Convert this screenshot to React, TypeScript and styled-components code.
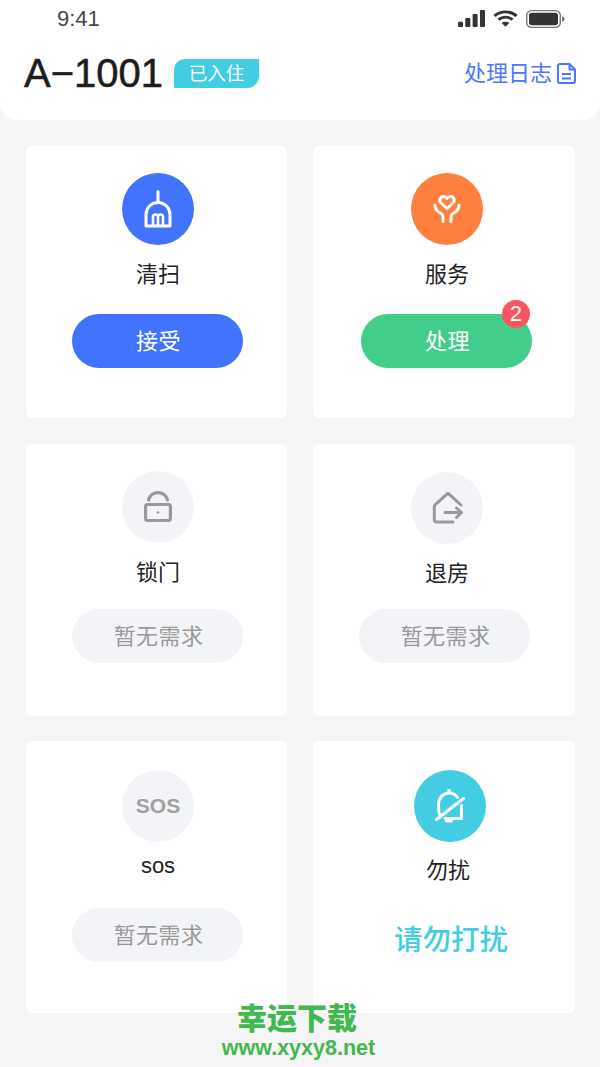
import React from 'react';
import styled, { createGlobalStyle } from 'styled-components';

const CJK = `"Noto Sans CJK SC", "Liberation Sans", sans-serif`;

const GlobalStyle = createGlobalStyle`
  html, body { margin: 0; padding: 0; background: #f5f5f5; }
  * { box-sizing: border-box; }
`;

const Page = styled.div`
  width: 600px;
  height: 1067px;
  position: relative;
  overflow: hidden;
  background: #f5f5f5;
  font-family: ${CJK};
`;

/* ── header ── */

const Header = styled.header`
  height: 120px;
  background: #fff;
  border-radius: 0 0 18px 18px;
`;

const StatusBar = styled.div`
  height: 40px;
  display: flex;
  align-items: center;
  justify-content: space-between;
  padding: 0 35px 3px 57px;
`;

const Clock = styled.span`
  font-family: "Liberation Sans", sans-serif;
  font-size: 22px;
  color: #484848;
`;

const StatusIcons = styled.div`
  display: flex;
  align-items: center;
  gap: 8px;
`;

const TitleRow = styled.div`
  display: flex;
  align-items: center;
  padding: 0 24px;
  height: 66px;
`;

const RoomName = styled.h1`
  margin: 0;
  font-family: "Liberation Sans", sans-serif;
  font-size: 40px;
  font-weight: 400;
  color: #1d1d1d;
  line-height: 50px;
  -webkit-text-stroke: 0.5px #1d1d1d;
`;

const StatusTag = styled.span`
  margin-left: 11px;
  width: 85px;
  height: 29px;
  padding-bottom: 2px;
  display: flex;
  align-items: center;
  justify-content: center;
  background: #42cde2;
  border-radius: 11px 0 12px 0;
  color: #fff;
  font-size: 18.5px;
`;

const LogLink = styled.a`
  margin-left: auto;
  display: flex;
  align-items: center;
  gap: 5px;
  color: #4a76ff;
  font-size: 22px;
  line-height: 30px;
  text-decoration: none;
`;

const LogText = styled.span`
  padding-bottom: 4px;
`;

/* ── cards ── */

const Grid = styled.main`
  display: grid;
  grid-template-columns: 261px 262px;
  grid-auto-rows: 272px;
  column-gap: 26px;
  row-gap: 25.5px;
  padding: 26px 0 0 26px;
`;

const Card = styled.section`
  background: #fff;
  border-radius: 6px;
  padding-top: 27px;
  display: flex;
  flex-direction: column;
  align-items: center;
`;

const Circle = styled.div<{ $bg: string; $shift: number; $top?: number }>`
  width: 72px;
  height: 72px;
  flex: none;
  border-radius: 50%;
  background: ${(p) => p.$bg};
  margin-top: ${(p) => p.$top ?? 0}px;
  margin-left: ${(p) => p.$shift * 2}px;
  display: flex;
  align-items: center;
  justify-content: center;
`;

const SosMark = styled.span`
  font-family: "Liberation Sans", sans-serif;
  font-size: 21px;
  font-weight: 700;
  color: #a0a0a0;
`;

const Label = styled.div<{ $top: number; $shift: number; $latin?: boolean }>`
  margin-top: ${(p) => p.$top}px;
  margin-left: ${(p) => p.$shift * 2}px;
  font-family: ${(p) => (p.$latin ? '"Liberation Sans", sans-serif' : CJK)};
  font-size: 22px;
  line-height: 30px;
  color: #222;
`;

const Action = styled.div<{ $bg: string; $fg: string; $top: number; $shift: number }>`
  position: relative;
  width: 171px;
  height: 54px;
  flex: none;
  margin-top: ${(p) => p.$top}px;
  margin-left: ${(p) => p.$shift * 2}px;
  padding: 0 0 4px 2px;
  border-radius: 27px;
  background: ${(p) => p.$bg};
  color: ${(p) => p.$fg};
  font-size: 22px;
  letter-spacing: 0.4px;
  display: flex;
  align-items: center;
  justify-content: center;
`;

const CountBadge = styled.span`
  position: absolute;
  top: -14px;
  right: 2px;
  width: 28px;
  height: 28px;
  border-radius: 50%;
  background: #fb5560;
  color: #fff;
  font-family: "Liberation Sans", sans-serif;
  font-size: 22px;
  line-height: 28px;
  text-align: center;
`;

const DndText = styled.div`
  margin-top: 35px;
  margin-left: 14px;
  font-size: 28.5px;
  line-height: 40px;
  font-weight: 500;
  color: #42cde2;
`;

/* ── watermark ── */

const Watermark = styled.div`
  position: absolute;
  left: 197px;
  top: 998px;
  width: 200px;
  display: flex;
  flex-direction: column;
  align-items: center;
  color: #3fb950;
  font-weight: 700;
`;

const WatermarkTitle = styled.div`
  font-size: 30px;
  line-height: 36px;
  font-weight: 900;
`;

const WatermarkUrl = styled.div`
  font-family: "Liberation Sans", sans-serif;
  font-size: 21.5px;
  line-height: 24px;
  margin: 2px 0 0 3px;
  white-space: nowrap;
`;

/* ── icons ── */

const SignalIcon = () => (
  <svg width="27" height="17" viewBox="0 0 27 19" preserveAspectRatio="none" fill="#333">
    <rect x="0" y="13" width="5" height="6" rx="1.2" />
    <rect x="7.3" y="9" width="5" height="10" rx="1.2" />
    <rect x="14.6" y="4.5" width="5" height="14.5" rx="1.2" />
    <rect x="22" y="0" width="5" height="19" rx="1.2" />
  </svg>
);

const WifiIcon = () => (
  <svg width="25" height="17" viewBox="0 0 25 19" preserveAspectRatio="none" fill="none" stroke="#333" strokeWidth="3.2">
    <path d="M1.5 6.6a15.5 15.5 0 0 1 22 0" />
    <path d="M5.6 10.8a9.7 9.7 0 0 1 13.8 0" />
    <path d="M12.5 18.6l-3.8-4a5.4 5.4 0 0 1 7.6 0z" fill="#333" stroke="none" />
  </svg>
);

const BatteryIcon = () => (
  <svg width="39" height="18" viewBox="0 0 39 20" preserveAspectRatio="none">
    <rect x="0.7" y="0.7" width="33.6" height="18.6" rx="5" fill="none" stroke="#777" strokeWidth="1.4" />
    <rect x="3" y="3" width="29" height="14" rx="3" fill="#333" />
    <path d="M36 7v6c1.6-.5 2.6-1.6 2.6-3S37.6 7.500 36 7z" fill="#777" />
  </svg>
);

const DocIcon = () => (
  <svg width="19" height="21" viewBox="0 0 19 21" fill="none" stroke="#4a76ff" strokeWidth="2" strokeLinejoin="round">
    <path d="M1 3a2 2 0 0 1 2-2h9.500L18 6.500V18a2 2 0 0 1-2 2H3a2 2 0 0 1-2-2z" />
    <path d="M12.500 1.500V6.500H17.500M5 11h9M5 15.500h9" />
  </svg>
);

const BroomIcon = () => (
  <svg width="28" height="38" viewBox="0 0 28 38" fill="none" stroke="#fff" strokeWidth="3" strokeLinecap="round" strokeLinejoin="round">
    <path d="M14 1.500v10" />
    <path d="M2 36V24.500a12 12 0 0 1 24 0V36z" />
    <path d="M9 35v-8a2.500 2.500 0 0 1 5 0v8M14 27a2.500 2.500 0 0 1 5 0v8" strokeWidth="2.600" />
  </svg>
);

const CareIcon = () => (
  <svg width="28" height="28" viewBox="0 0 28 28" fill="none" stroke="#fff" strokeWidth="3" strokeLinecap="round" strokeLinejoin="round">
    <path d="M14 13.500L8 8C5.500 5.500 7.500 1.500 10.500 1.500 12 1.500 13.200 2.300 14 3.500 14.800 2.300 16 1.500 17.500 1.500 20.500 1.500 22.500 5.500 20 8z" />
    <path d="M2 10C2 14 5 17 8 18.500 9.500 19.300 10 20 10 22V26.500" />
    <path d="M26 10C26 14 23 17 20 18.500 18.500 19.300 18 20 18 22V26.500" />
  </svg>
);

const LockIcon = () => (
  <svg width="28" height="31" viewBox="0 0 28 31" fill="none" stroke="#999" strokeWidth="3.200" strokeLinecap="round" strokeLinejoin="round">
    <rect x="1.600" y="13.500" width="24.800" height="16" rx="2" />
    <path d="M4.500 9C6 4 9.500 1.600 14 1.600S22 4 23.500 9" />
    <circle cx="14" cy="21.500" r="1.300" fill="#999" stroke="none" />
  </svg>
);

const CheckoutIcon = () => (
  <svg width="31" height="32" viewBox="0 0 31 32" fill="none" stroke="#999" strokeWidth="3" strokeLinecap="round" strokeLinejoin="round">
    <path d="M29 13L17.300 2.300a2 2 0 0 0-2.700 0L3 12.800a2 2 0 0 0-.700 1.500V27.500A2.500 2.500 0 0 0 4.800 30H21" />
    <path d="M13 20.500H29.500M24.500 16L29.500 20.500 24.500 25.500" />
  </svg>
);

const MuteIcon = () => (
  <svg width="30" height="34" viewBox="0 0 30 34" fill="none" stroke="#fff" strokeWidth="3" strokeLinecap="round" strokeLinejoin="round">
    <path d="M4.500 25.500C3.500 22 3.500 18.500 3.500 15.500 3.500 8.500 8.500 4 14 4 17.500 4 20.500 5.500 22.500 8.500" />
    <path d="M14 1.500h.1" strokeWidth="3.500" />
    <path d="M1.500 30.500L28.500 9.500" />
    <path d="M26.500 16.500V29.500H10" />
    <path d="M11.500 32h5" />
  </svg>
);

export default function App() {
  return (
    <Page>
      <GlobalStyle />
      <Header>
        <StatusBar>
          <Clock>9:41</Clock>
          <StatusIcons>
            <SignalIcon />
            <WifiIcon />
            <BatteryIcon />
          </StatusIcons>
        </StatusBar>
        <TitleRow>
          <RoomName>A−1001</RoomName>
          <StatusTag>已入住</StatusTag>
          <LogLink>
            <LogText>处理日志</LogText>
            <DocIcon />
          </LogLink>
        </TitleRow>
      </Header>

      <Grid>
        <Card>
          <Circle $bg="#4173ff" $shift={1.5}><BroomIcon /></Circle>
          <Label $top={12} $shift={1.5}>清扫</Label>
          <Action $bg="#4173ff" $fg="#fff" $top={27} $shift={1}>接受</Action>
        </Card>
        <Card>
          <Circle $bg="#ff7f3e" $shift={3}><CareIcon /></Circle>
          <Label $top={12} $shift={3}>服务</Label>
          <Action $bg="#42cd8a" $fg="#fff" $top={27} $shift={2.5}>
            处理
            <CountBadge>2</CountBadge>
          </Action>
        </Card>
        <Card>
          <Circle $bg="#f3f4f8" $shift={1.5}><LockIcon /></Circle>
          <Label $top={12} $shift={1.5}>锁门</Label>
          <Action $bg="#f3f4f8" $fg="#999" $top={24} $shift={1}>暂无需求</Action>
        </Card>
        <Card>
          <Circle $bg="#f3f4f8" $shift={3} $top={1}><CheckoutIcon /></Circle>
          <Label $top={12} $shift={3}>退房</Label>
          <Action $bg="#f3f4f8" $fg="#999" $top={23} $shift={0.5}>暂无需求</Action>
        </Card>
        <Card>
          <Circle $bg="#f3f4f8" $shift={1.5} $top={2}><SosMark>SOS</SosMark></Circle>
          <Label $top={9} $shift={1.5} $latin>sos</Label>
          <Action $bg="#f3f4f8" $fg="#999" $top={27} $shift={1}>暂无需求</Action>
        </Card>
        <Card>
          <Circle $bg="#42cde2" $shift={6} $top={2}><MuteIcon /></Circle>
          <Label $top={11} $shift={4}>勿扰</Label>
          <DndText>请勿打扰</DndText>
        </Card>
      </Grid>

      <Watermark>
        <WatermarkTitle>幸运下载</WatermarkTitle>
        <WatermarkUrl>www.xyxy8.net</WatermarkUrl>
      </Watermark>
    </Page>
  );
}
